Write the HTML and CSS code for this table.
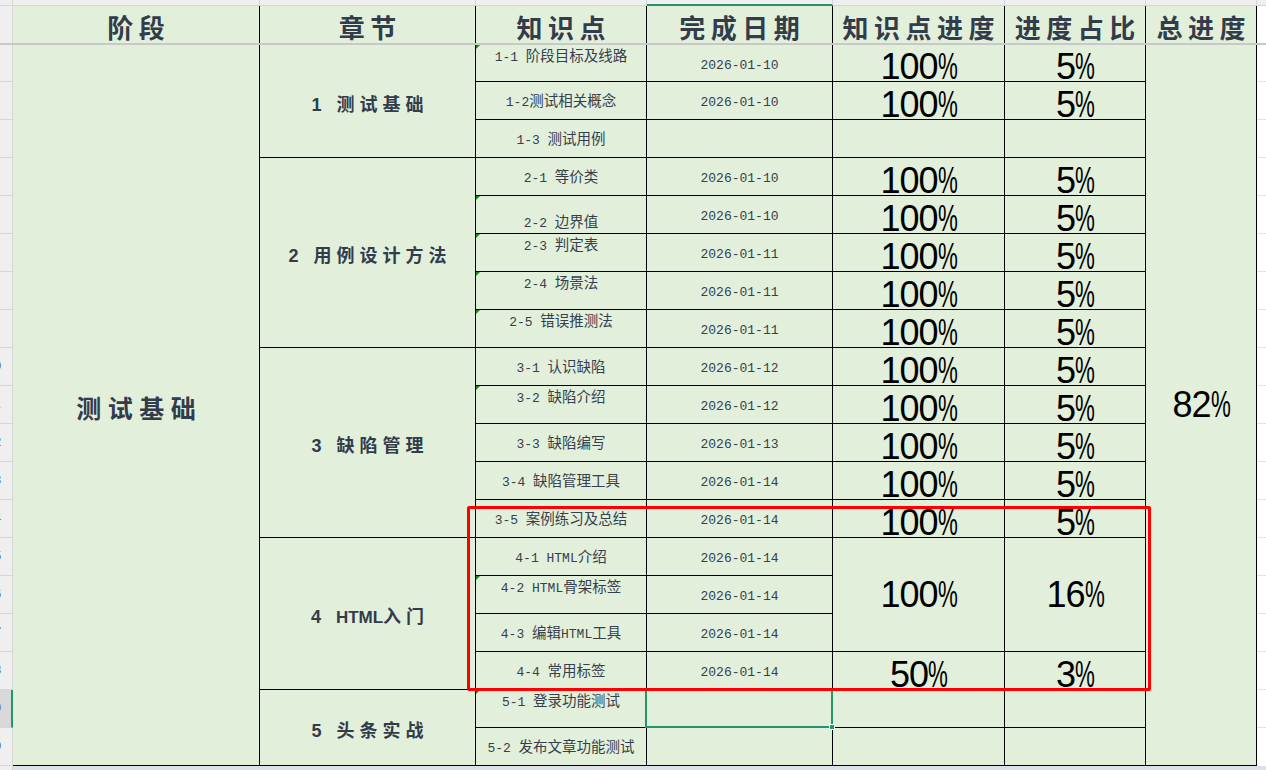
FILE: index.html
```html
<!DOCTYPE html>
<html lang="zh-CN">
<head>
<meta charset="utf-8">
<title>学习进度表</title>
<link rel="stylesheet" href="styles.css">
</head>
<body>
<div class="sheet">
  <div class="colbar">
    <div class="corner"></div>
    <div class="colheads">
      <div></div><div></div><div></div><div class="sel"></div><div></div><div></div><div></div>
    </div>
    <div class="colrest"></div>
  </div>

  <div class="headband">
    <div class="rh"></div>
    <div class="hgrid">
      <div class="h">阶段</div>
      <div class="h">章节</div>
      <div class="h">知识点</div>
      <div class="h">完成日期</div>
      <div class="h">知识点进度</div>
      <div class="h">进度占比</div>
      <div class="h">总进度</div>
    </div>
    <div class="rest"></div>
  </div>

  <div class="freeze"></div>

  <div class="databand">
    <div class="rowheads">
      <div class="rn first"><span>2</span></div>
      <div class="rn"><span>3</span></div>
      <div class="rn"><span>4</span></div>
      <div class="rn"><span>5</span></div>
      <div class="rn"><span>6</span></div>
      <div class="rn"><span>7</span></div>
      <div class="rn"><span>8</span></div>
      <div class="rn"><span>9</span></div>
      <div class="rn"><span>10</span></div>
      <div class="rn"><span>11</span></div>
      <div class="rn"><span>12</span></div>
      <div class="rn"><span>13</span></div>
      <div class="rn"><span>14</span></div>
      <div class="rn"><span>15</span></div>
      <div class="rn"><span>16</span></div>
      <div class="rn"><span>17</span></div>
      <div class="rn"><span>18</span></div>
      <div class="rn sel"><span>19</span></div>
      <div class="rn"><span>20</span></div>
    </div>

    <div class="grid">
      <div class="c big a"><span>测试基础</span></div>
      <div class="c ch b1"><span>1 测试基础</span></div>
      <div class="c ch b2"><span>2 用例设计方法</span></div>
      <div class="c ch b3"><span>3 缺陷管理</span></div>
      <div class="c ch b4"><span>4 <span class="lw">HTML</span>入门</span></div>
      <div class="c ch b5"><span>5 头条实战</span></div>
      <div class="c p g"><span>82<i>%</i></span></div>
      <div class="c p e4"><span>100<i>%</i></span></div>
      <div class="c p f4"><span>16<i>%</i></span></div>

      <!-- row 1 -->
      <div class="c k top tri"><span><span class="m">1-1 </span>阶段目标及线路</span></div>
      <div class="c d">2026-01-10</div>
      <div class="c p"><span>100<i>%</i></span></div>
      <div class="c p"><span>5<i>%</i></span></div>
      <!-- row 2 -->
      <div class="c k"><span><span class="m">1-2</span>测试相关概念</span></div>
      <div class="c d">2026-01-10</div>
      <div class="c p"><span>100<i>%</i></span></div>
      <div class="c p"><span>5<i>%</i></span></div>
      <!-- row 3 -->
      <div class="c k"><span><span class="m">1-3 </span>测试用例</span></div>
      <div class="c d"></div>
      <div class="c p"></div>
      <div class="c p"></div>
      <!-- row 4 -->
      <div class="c k"><span><span class="m">2-1 </span>等价类</span></div>
      <div class="c d">2026-01-10</div>
      <div class="c p"><span>100<i>%</i></span></div>
      <div class="c p"><span>5<i>%</i></span></div>
      <!-- row 5 -->
      <div class="c k bot tri"><span><span class="m">2-2 </span>边界值</span></div>
      <div class="c d">2026-01-10</div>
      <div class="c p"><span>100<i>%</i></span></div>
      <div class="c p"><span>5<i>%</i></span></div>
      <!-- row 6 -->
      <div class="c k top tri"><span><span class="m">2-3 </span>判定表</span></div>
      <div class="c d">2026-01-11</div>
      <div class="c p"><span>100<i>%</i></span></div>
      <div class="c p"><span>5<i>%</i></span></div>
      <!-- row 7 -->
      <div class="c k top tri"><span><span class="m">2-4 </span>场景法</span></div>
      <div class="c d">2026-01-11</div>
      <div class="c p"><span>100<i>%</i></span></div>
      <div class="c p"><span>5<i>%</i></span></div>
      <!-- row 8 -->
      <div class="c k top tri"><span><span class="m">2-5 </span>错误推测法</span></div>
      <div class="c d">2026-01-11</div>
      <div class="c p"><span>100<i>%</i></span></div>
      <div class="c p"><span>5<i>%</i></span></div>
      <!-- row 9 -->
      <div class="c k"><span><span class="m">3-1 </span>认识缺陷</span></div>
      <div class="c d">2026-01-12</div>
      <div class="c p"><span>100<i>%</i></span></div>
      <div class="c p"><span>5<i>%</i></span></div>
      <!-- row 10 -->
      <div class="c k top tri"><span><span class="m">3-2 </span>缺陷介绍</span></div>
      <div class="c d">2026-01-12</div>
      <div class="c p"><span>100<i>%</i></span></div>
      <div class="c p"><span>5<i>%</i></span></div>
      <!-- row 11 -->
      <div class="c k"><span><span class="m">3-3 </span>缺陷编写</span></div>
      <div class="c d">2026-01-13</div>
      <div class="c p"><span>100<i>%</i></span></div>
      <div class="c p"><span>5<i>%</i></span></div>
      <!-- row 12 -->
      <div class="c k"><span><span class="m">3-4 </span>缺陷管理工具</span></div>
      <div class="c d">2026-01-14</div>
      <div class="c p"><span>100<i>%</i></span></div>
      <div class="c p"><span>5<i>%</i></span></div>
      <!-- row 13 -->
      <div class="c k"><span><span class="m">3-5 </span>案例练习及总结</span></div>
      <div class="c d">2026-01-14</div>
      <div class="c p"><span>100<i>%</i></span></div>
      <div class="c p"><span>5<i>%</i></span></div>
      <!-- row 14 -->
      <div class="c k"><span><span class="m">4-1 HTML</span>介绍</span></div>
      <div class="c d">2026-01-14</div>
      <!-- row 15 -->
      <div class="c k top tri"><span><span class="m">4-2 HTML</span>骨架标签</span></div>
      <div class="c d">2026-01-14</div>
      <!-- row 16 -->
      <div class="c k"><span><span class="m">4-3 </span>编辑<span class="m">HTML</span>工具</span></div>
      <div class="c d">2026-01-14</div>
      <!-- row 17 -->
      <div class="c k"><span><span class="m">4-4 </span>常用标签</span></div>
      <div class="c d">2026-01-14</div>
      <div class="c p"><span>50<i>%</i></span></div>
      <div class="c p"><span>3<i>%</i></span></div>
      <!-- row 18 -->
      <div class="c k top tri"><span><span class="m">5-1 </span>登录功能测试</span></div>
      <div class="c d cur"><i class="handle"></i></div>
      <div class="c p"></div>
      <div class="c p"></div>
      <!-- row 19 -->
      <div class="c k"><span><span class="m">5-2 </span>发布文章功能测试</span></div>
      <div class="c d"></div>
      <div class="c p"></div>
      <div class="c p"></div>

      <div class="mark"></div>
    </div>

    <div class="rest lines"></div>
  </div>

  <div class="foot">
    <div class="rh"></div>
    <div class="fr"></div>
  </div>
</div>
</body>
</html>
```

FILE: styles.css
```css
* { box-sizing: border-box; margin: 0; padding: 0; }

html, body {
  width: 1266px;
  height: 770px;
  overflow: hidden;
  background: #fff;
}

body {
  font-family: "Noto Sans CJK SC", sans-serif;
  color: #343d4b;
}

.sheet {
  --cols: 247px 216px 171px 186px 172px 141px 111px;
  display: flex;
  flex-direction: column;
  width: 1266px;
  height: 770px;
}

/* ---------- column header strip (cut off at top) ---------- */
.colbar {
  display: flex;
  height: 6px;
  background: #efefef;
}
.corner {
  width: 13px;
  border-right: 1px solid #d6d6d6;
  border-bottom: 1px solid #d6d6d6;
}
.colheads {
  display: grid;
  grid-template-columns: var(--cols);
}
.colheads div {
  border-right: 1px solid #d6d6d6;
  border-bottom: 1px solid #d6d6d6;
}
.colheads .sel {
  border-bottom: 2px solid #1f9768;
}
.colrest {
  flex: 1;
  border-bottom: 1px solid #d6d6d6;
}

/* ---------- header band ---------- */
.headband {
  display: flex;
  height: 37px;
}
.rh {
  width: 13px;
  flex: none;
  background: #efefef;
  border-right: 1px solid #d6d6d6;
}
.hgrid {
  display: grid;
  grid-template-columns: var(--cols);
  background: #e2efda;
}
.h {
  display: flex;
  align-items: center;
  justify-content: center;
  border-right: 1px solid #000;
  font-size: 26px;
  font-weight: 700;
  letter-spacing: 5.5px;
  padding: 4px 0 0 5.5px;
  line-height: 1.2;
  color: #333c4a;
  white-space: nowrap;
}
.rest {
  flex: 1;
  background: #fff;
}

.freeze {
  height: 2px;
  background: #c8c8c8;
}

/* ---------- data band ---------- */
.databand {
  display: flex;
  height: 721px;
}

.rowheads {
  width: 13px;
  flex: none;
  display: flex;
  flex-direction: column;
}
.rn {
  height: 38px;
  background: #efefef;
  border-right: 1px solid #d6d6d6;
  border-bottom: 1px solid #d6d6d6;
  overflow: hidden;
}
.rn.first { height: 37px; }
.rn span {
  display: block;
  width: 36px;
  margin-left: -24px;
  text-align: center;
  font-family: "Liberation Sans", sans-serif;
  font-size: 13px;
  line-height: 36px;
  color: #5f6b7d;
}
.rn.sel {
  background: #d9d9d9;
  border-right: 2px solid #1f9768;
}

.lines {
  background-image: repeating-linear-gradient(to bottom, transparent 0 37px, #e1e1e1 37px 38px);
  background-position: 0 -1px;
}

.grid {
  position: relative;
  display: grid;
  grid-template-columns: var(--cols);
  grid-template-rows: 37px repeat(18, 38px);
  background: #e2efda;
}

.c {
  display: flex;
  align-items: center;
  justify-content: center;
  border-right: 1px solid #000;
  border-bottom: 1px solid #000;
  white-space: pre;
  min-width: 0;
}
.c.top { align-items: flex-start; }
.c.bot { align-items: flex-end; }

/* merged cells */
.a  { grid-column: 1; grid-row: 1 / span 19; }
.b1 { grid-column: 2; grid-row: 1 / span 3; }
.b2 { grid-column: 2; grid-row: 4 / span 5; }
.b3 { grid-column: 2; grid-row: 9 / span 5; }
.b4 { grid-column: 2; grid-row: 14 / span 4; }
.b5 { grid-column: 2; grid-row: 18 / span 2; }
.e4 { grid-column: 5; grid-row: 14 / span 3; }
.f4 { grid-column: 6; grid-row: 14 / span 3; }
.g  { grid-column: 7; grid-row: 1 / span 19; }

/* stage column */
.big {
  font-size: 25px;
  font-weight: 700;
  letter-spacing: 6.5px;
  padding: 3px 0 0 6.5px;
  color: #333c4a;
}

/* chapter column */
.ch {
  font-family: "Liberation Sans", "Noto Sans CJK SC", sans-serif;
  font-size: 18px;
  font-weight: 700;
  letter-spacing: 5px;
  padding: 3px 0 0 5px;
  color: #333c4a;
}
.ch .lw {
  font-size: 17px;
  letter-spacing: 0;
}

/* knowledge point column */
.k {
  font-size: 14.5px;
  line-height: 19px;
  color: #363f4d;
}
.k .m {
  font-family: "Liberation Mono", monospace;
  font-size: 13px;
}
.tri { position: relative; }
.tri::before {
  content: "";
  position: absolute;
  left: 0;
  top: 0;
  border-top: 4px solid #1d861d;
  border-right: 4px solid transparent;
}

/* date column */
.d {
  font-family: "Liberation Mono", monospace;
  font-size: 13px;
  line-height: 16px;
  padding-top: 5px;
  color: #363f4d;
}

/* percentage columns */
.p {
  align-items: flex-end;
  font-family: "Liberation Sans", sans-serif;
  font-size: 36px;
  line-height: 28px;
  color: #000;
}
.p > span {
  letter-spacing: -1px;
  padding-left: 1px;
}
.p i {
  display: inline-block;
  font-style: normal;
  letter-spacing: 0;
  transform: scaleX(0.62);
  transform-origin: 0 50%;
  margin-right: -12.2px;
}
.e4, .f4, .g { align-items: center; }

/* current cell selection */
.cur { position: relative; }
.cur::after {
  content: "";
  position: absolute;
  left: -2px;
  top: -2px;
  right: -1px;
  bottom: -1px;
  border: 2px solid #1f9768;
  z-index: 2;
}
.handle {
  position: absolute;
  right: -3px;
  bottom: -3px;
  width: 6px;
  height: 6px;
  background: #1f9768;
  border: 1px solid #fff;
  z-index: 3;
}

/* red annotation rectangle */
.mark {
  position: absolute;
  left: 454px;
  top: 461px;
  width: 684px;
  height: 185px;
  border: 3px solid #ff0000;
  border-radius: 2px;
  z-index: 4;
  pointer-events: none;
}

/* bottom strip */
.foot {
  display: flex;
  height: 4px;
}
.foot .fr {
  flex: 1;
  background: #dce0e8;
}
```
